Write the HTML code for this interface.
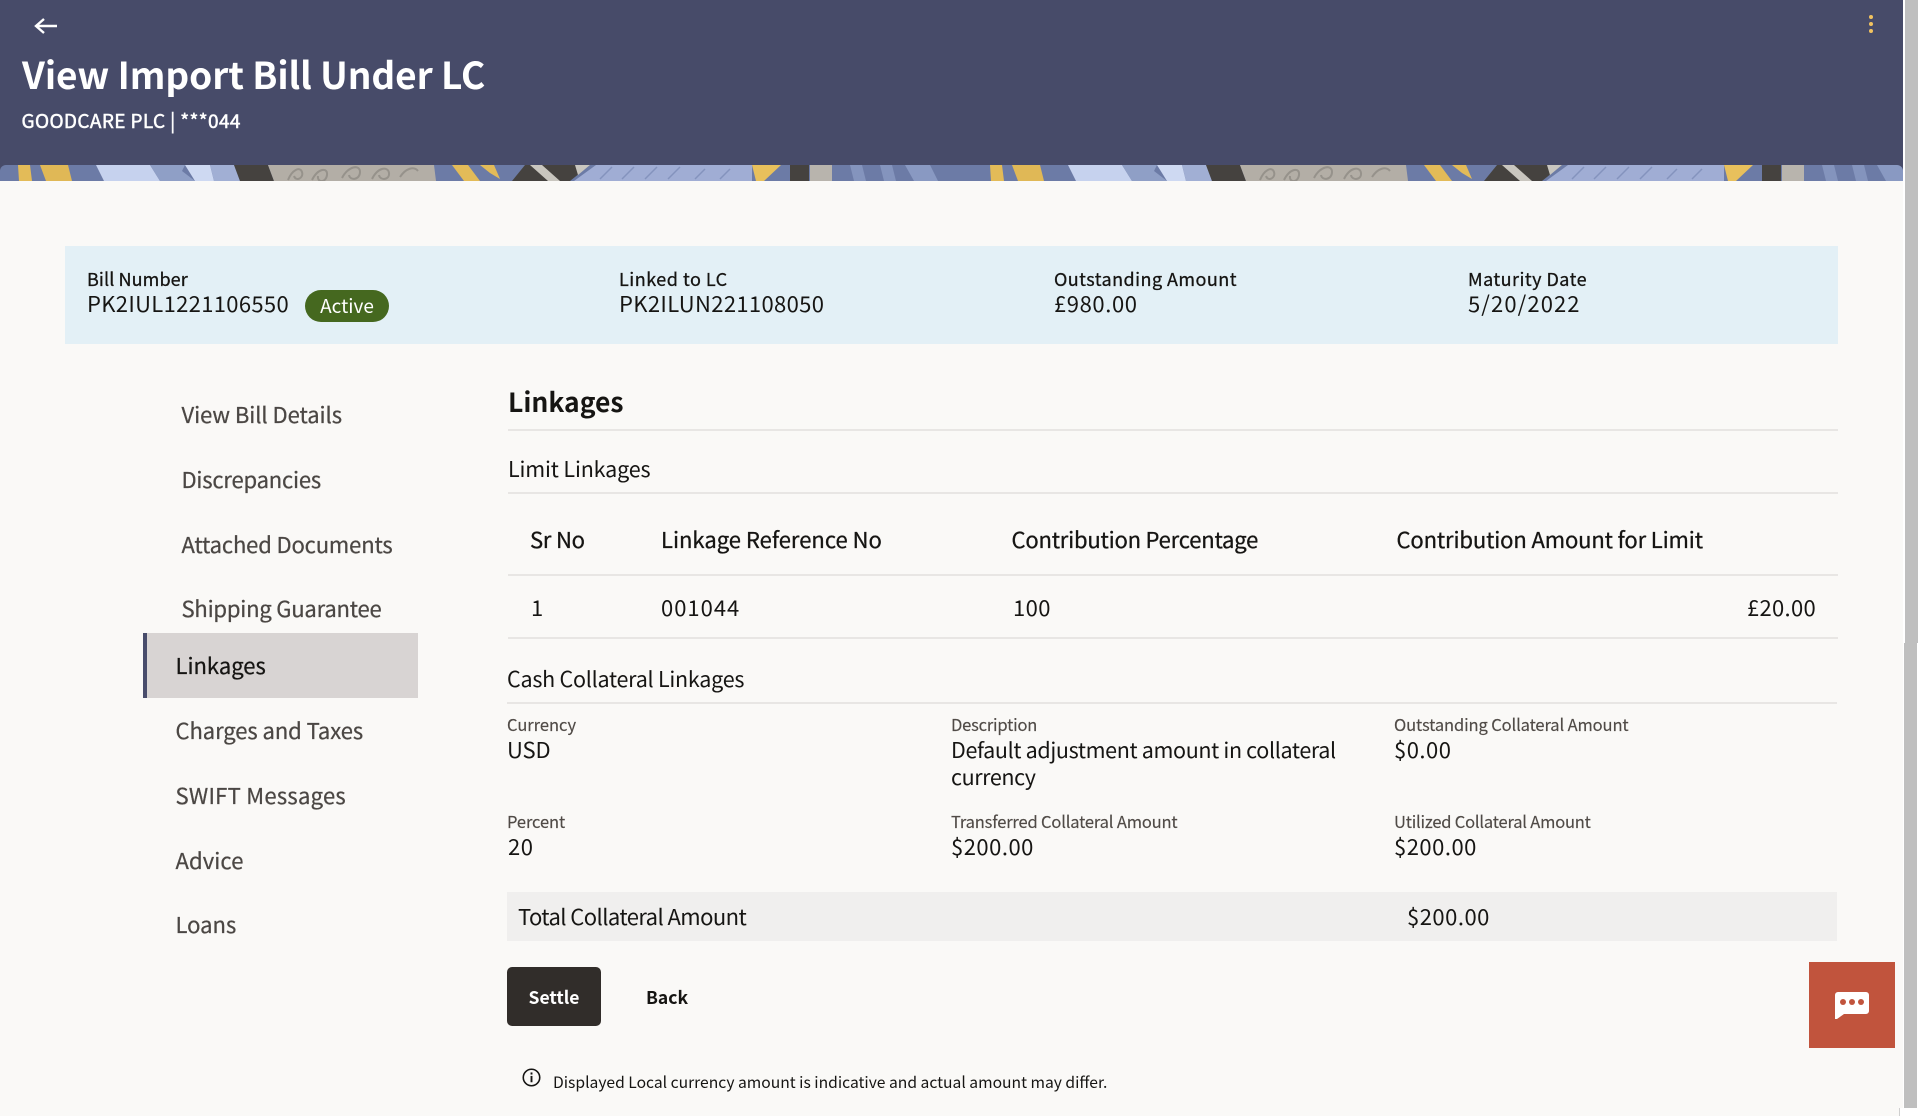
<!DOCTYPE html>
<html><head><meta charset="utf-8"><title>View Import Bill Under LC</title>
<style>
html,body{margin:0;padding:0;width:1919px;height:1116px;overflow:hidden;background:#fff}
body{font-family:"Noto Sans CJK JP","Liberation Sans",sans-serif;color:#161513;position:relative}
.a{position:absolute}
.t{position:absolute;white-space:nowrap;line-height:30px;height:30px}
.l{font-size:18px;-webkit-text-stroke:.3px currentColor}
.v{font-size:22px}
.h{font-size:22px;-webkit-text-stroke:.3px currentColor}
.s{font-size:16.5px;color:#504b47;-webkit-text-stroke:.15px currentColor}
.n{font-size:22px;color:#4b4744;-webkit-text-stroke:.25px currentColor}
.line{position:absolute;height:2px;background:#e8e6e4;left:508px;width:1330px}
</style></head><body>
<div class="a" style="left:0;top:0;width:1903px;height:1108px;background:#faf9f7"></div>
<div class="a" style="left:0;top:0;width:1903px;height:181px;background:#474b69"></div>
<svg class="a" style="left:0;top:165px" width="1903" height="16" viewBox="0 0 1903 16">
<defs>
<pattern id="p" x="0" y="0" width="972" height="16" patternUnits="userSpaceOnUse">
<rect width="972" height="16" fill="#6c7ba6"/>
<polygon points="18,0 30,0 32,16 19,16" fill="#e3bb58"/>
<polygon points="40,0 68,0 72,16 46,16" fill="#e0b856"/>
<polygon points="96,0 150,0 160,16 104,16" fill="#c6d2ee"/>
<polygon points="150,0 185,0 182,6 195,16 160,16" fill="#8f9fc6"/>
<polygon points="185,0 210,0 214,16 195,16" fill="#ced9f2"/>
<polygon points="210,0 234,0 240,16 214,16" fill="#a1afd4"/>
<polygon points="234,0 268,0 274,16 240,16" fill="#45423f"/>
<polygon points="268,0 434,0 436,16 274,16" fill="#b3aea6"/>
<path d="M288 15c4-10 12-14 14-8s-6 10-8 4M312 15c6-12 16-13 15-5s-10 8-9 1M342 13c6-12 18-14 18-6s-10 9-11 3M372 14c6-12 16-13 17-6s-9 8-10 2M400 12c6-9 14-11 18-6" fill="none" stroke="#96928b" stroke-width="2"/>
<polygon points="452,0 468,0 480,16 464,16" fill="#e3bb58"/>
<polygon points="480,0 494,0 500,14 490,8" fill="#e3bb58"/>
<polygon points="525,0 590,0 570,16 512,16" fill="#45423f"/>
<polygon points="530,0 542,0 560,16 548,16" fill="#c9c6bf"/>
<polygon points="575,0 590,0 578,10" fill="#c9c6bf"/>
<polygon points="596,0 752,0 752,16 574,16" fill="#a0add4"/>
<path d="M600 14l12-12M622 14l12-12M645 14l12-12M668 14l12-12M695 14l10-10M720 14l10-10" fill="none" stroke="#8493bd" stroke-width="1.5"/>
<polygon points="752,0 781,0 764,16 756,16" fill="#e8c05c"/>
<rect x="790" y="0" width="19" height="16" fill="#45423f"/>
<rect x="810" y="0" width="22" height="16" fill="#b8b4ad"/>
<polygon points="850,0 862,0 866,16 854,16" fill="#8494bd"/>
<polygon points="880,0 892,0 896,16 884,16" fill="#8494bd"/>
<polygon points="905,0 930,0 938,16 914,16" fill="#8999c2"/>
</pattern>
</defs>
<path d="M0 16V6a6 6 0 0 1 6-6H1897a6 6 0 0 1 6 6V16Z" fill="url(#p)"/>
</svg>
<div class="a" style="left:1905px;top:0;width:13px;height:643px;background:#bfbfbf"></div>
<div class="a" style="left:1904px;top:643px;width:13px;height:465px;background:#bfbfbf"></div>
<div class="a" style="left:1899px;top:1108px;width:1px;height:8px;background:#cfcfcf"></div>
<div class="a" style="left:1900px;top:1108px;width:19px;height:8px;background:#fff"></div>
<div class="a" style="left:0;top:1108px;width:1899px;height:8px;background:#faf9f7"></div>

<svg class="a" style="left:33px;top:16px" width="26" height="20" viewBox="0 0 26 20"><path d="M24 10H3M11 3l-8 7 8 7" fill="none" stroke="#fff" stroke-width="2.4"/></svg>
<svg class="a" style="left:1867px;top:14px" width="8" height="20" viewBox="0 0 8 20"><circle cx="4" cy="3" r="2" fill="#f2c35f"/><circle cx="4" cy="10" r="2" fill="#f2c35f"/><circle cx="4" cy="17" r="2" fill="#f2c35f"/></svg>
<div class="t" style="left:22px;top:53px;height:40px;line-height:40px;font-size:37px;font-weight:700;letter-spacing:-.05px;color:#fff">View Import Bill Under LC</div>
<div class="t" style="left:21.5px;top:106px;font-size:19px;letter-spacing:.38px;color:#fff;-webkit-text-stroke:.5px #fff">GOODCARE PLC | ***044</div>

<div class="a" style="left:65px;top:246px;width:1773px;height:98px;background:#e3f0f6"></div>
<div class="t l" style="left:87px;top:264px;letter-spacing:.1px">Bill Number</div>
<div class="t v" style="left:87px;top:288px;letter-spacing:.33px">PK2IUL1221106550</div>
<div class="a" style="left:305px;top:290px;width:84px;height:32px;border-radius:16px;background:#45681f;color:#fff;font-size:19px;line-height:32px;text-align:center">Active</div>
<div class="t l" style="left:619px;top:264px;letter-spacing:.5px">Linked to LC</div>
<div class="t v" style="left:619px;top:288px;letter-spacing:.35px">PK2ILUN221108050</div>
<div class="t l" style="left:1054px;top:264px;letter-spacing:.45px">Outstanding Amount</div>
<div class="t v" style="left:1054px;top:288px;letter-spacing:.6px">£980.00</div>
<div class="t l" style="left:1468px;top:264px;letter-spacing:.46px">Maturity Date</div>
<div class="t v" style="left:1468px;top:288px;letter-spacing:1.1px">5/20/2022</div>

<div class="t n" style="left:181.5px;top:399px;letter-spacing:-.05px">View Bill Details</div>
<div class="t n" style="left:181.5px;top:464px;letter-spacing:-.2px">Discrepancies</div>
<div class="t n" style="left:181.5px;top:529px;letter-spacing:-.15px">Attached Documents</div>
<div class="t n" style="left:181.5px;top:593px;letter-spacing:-.2px">Shipping Guarantee</div>
<div class="a" style="left:143px;top:633px;width:271px;height:65px;background:#d8d4d3;border-left:4px solid #484c6b"></div>
<div class="t n" style="left:175.5px;top:650px;color:#161513">Linkages</div>
<div class="t n" style="left:175.5px;top:715px;letter-spacing:-.07px">Charges and Taxes</div>
<div class="t n" style="left:175.5px;top:780px;letter-spacing:.27px">SWIFT Messages</div>
<div class="t n" style="left:175.5px;top:845px;letter-spacing:.1px">Advice</div>
<div class="t n" style="left:175.5px;top:909px">Loans</div>

<div class="t" style="left:508px;top:386px;font-size:26.5px;font-weight:700">Linkages</div>
<div class="line" style="top:429px"></div>
<div class="t" style="left:508px;top:454px;font-size:21.5px;letter-spacing:-.15px">Limit Linkages</div>
<div class="line" style="top:492px"></div>
<div class="t h" style="left:530px;top:524px;letter-spacing:-.2px">Sr No</div>
<div class="t h" style="left:661px;top:524px">Linkage Reference No</div>
<div class="t h" style="left:1011.5px;top:524px;letter-spacing:-.2px">Contribution Percentage</div>
<div class="t h" style="left:1396.5px;top:524px;letter-spacing:-.13px">Contribution Amount for Limit</div>
<div class="line" style="top:574px"></div>
<div class="t v" style="left:531px;top:592px">1</div>
<div class="t v" style="left:661px;top:592px;letter-spacing:1px">001044</div>
<div class="t v" style="left:1013px;top:592px;letter-spacing:.4px">100</div>
<div class="t v" style="right:103px;top:592px;letter-spacing:.3px">£20.00</div>
<div class="line" style="top:637px"></div>
<div class="t" style="left:507px;top:664px;font-size:21.5px;letter-spacing:-.25px">Cash Collateral Linkages</div>
<div class="line" style="top:702px;left:507px"></div>

<div class="t s" style="left:507px;top:709px;letter-spacing:-.03px">Currency</div>
<div class="t v" style="left:507px;top:734px;letter-spacing:-.1px">USD</div>
<div class="t s" style="left:951px;top:709px;letter-spacing:-.2px">Description</div>
<div class="t v" style="left:951px;top:735px;font-size:21.5px;letter-spacing:-.35px">Default adjustment amount in collateral</div>
<div class="t v" style="left:951px;top:762px;font-size:21.5px;letter-spacing:-.4px">currency</div>
<div class="t s" style="left:1394px;top:709px;letter-spacing:-.12px">Outstanding Collateral Amount</div>
<div class="t v" style="left:1394px;top:734px;letter-spacing:.5px">$0.00</div>
<div class="t s" style="left:507px;top:806px;letter-spacing:-.1px">Percent</div>
<div class="t v" style="left:508px;top:831px;letter-spacing:.6px">20</div>
<div class="t s" style="left:951px;top:806px;letter-spacing:-.17px">Transferred Collateral Amount</div>
<div class="t v" style="left:951px;top:831px;letter-spacing:.5px">$200.00</div>
<div class="t s" style="left:1394px;top:806px;letter-spacing:-.2px">Utilized Collateral Amount</div>
<div class="t v" style="left:1394px;top:831px;letter-spacing:.5px">$200.00</div>

<div class="a" style="left:507px;top:892px;width:1330px;height:49px;background:#f0efee"></div>
<div class="t v" style="left:518px;top:901px;letter-spacing:-.58px">Total Collateral Amount</div>
<div class="t v" style="left:1407px;top:901px;letter-spacing:.5px">$200.00</div>

<div class="a" style="left:507px;top:967px;width:94px;height:59px;border-radius:5px;background:#312d2a;color:#fff;font-size:17.5px;font-weight:700;line-height:61px;text-align:center">Settle</div>
<div class="t" style="left:646px;top:983px;font-size:17.5px;font-weight:700">Back</div>

<svg class="a" style="left:522px;top:1068px" width="19" height="19" viewBox="0 0 18 18"><circle cx="9" cy="9" r="7.8" fill="none" stroke="#161513" stroke-width="1.5"/><rect x="8.1" y="7.5" width="1.8" height="6" fill="#161513"/><rect x="8.1" y="4.2" width="1.8" height="2" fill="#161513"/></svg>
<div class="t" style="left:553px;top:1067px;font-size:15.65px">Displayed Local currency amount is indicative and actual amount may differ.</div>

<div class="a" style="left:1809px;top:962px;width:86px;height:86px;background:#c1543d"></div>
<svg class="a" style="left:1835px;top:992px" width="34" height="27" viewBox="0 0 34 27"><path d="M3 0H31a3 3 0 0 1 3 3V19a3 3 0 0 1-3 3H9L2 27H0V3A3 3 0 0 1 3 0Z" fill="#fff"/><circle cx="8" cy="10" r="3" fill="#c1543d"/><circle cx="17" cy="10" r="3" fill="#c1543d"/><circle cx="26" cy="10" r="3" fill="#c1543d"/></svg>
</body></html>
